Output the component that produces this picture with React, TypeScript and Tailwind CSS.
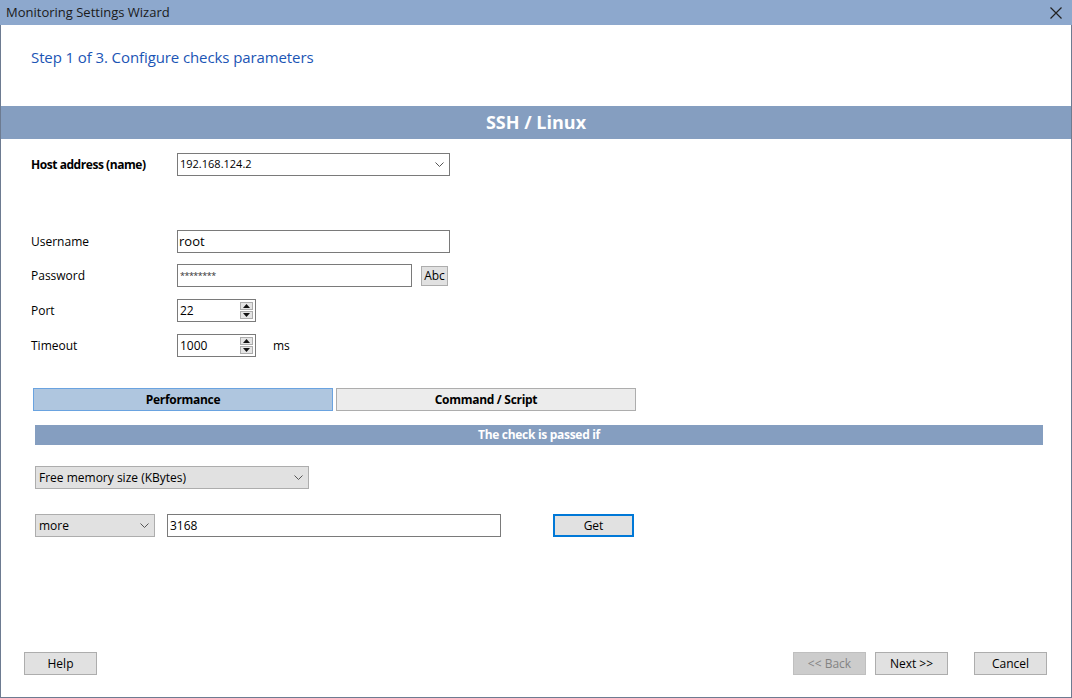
import React from 'react';

const font = { fontFamily: '"Open Sans", "Noto Sans", "Liberation Sans", sans-serif' };

function Chevron() {
  return (
    <svg width="9" height="6" viewBox="0 0 9 6" className="shrink-0">
      <path d="M0.5 0.5 L4.5 4.5 L8.5 0.5" fill="none" stroke="#555" strokeWidth="1" />
    </svg>
  );
}

function Spin({ value }: { value: string }) {
  return (
    <div className="flex h-[23px] w-[79px] items-center justify-between border border-[#7a7a7a] bg-white pl-[2px] pr-[2px]">
      <span className="text-[12px] text-black">{value}</span>
      <div className="flex flex-col gap-[1px]">
        <div className="flex h-[8px] w-[13px] items-center justify-center border border-[#adadad] bg-[#e5e5e5]">
          <svg width="7" height="4" viewBox="0 0 7 4"><path d="M0 4 L3.5 0 L7 4 Z" fill="#111" /></svg>
        </div>
        <div className="flex h-[8px] w-[13px] items-center justify-center border border-[#adadad] bg-[#e5e5e5]">
          <svg width="7" height="4" viewBox="0 0 7 4"><path d="M0 0 L3.5 4 L7 0 Z" fill="#111" /></svg>
        </div>
      </div>
    </div>
  );
}

function Row({ label, bold, children, className }: { label: string; bold?: boolean; children: React.ReactNode; className?: string }) {
  return (
    <div className={`flex h-[23px] items-center pl-[30px] ${className ?? ''}`}>
      <div className={`w-[146px] text-[12px] text-black ${bold ? 'font-bold tracking-[-0.45px]' : ''}`}>{label}</div>
      {children}
    </div>
  );
}

function WinButton({ label, disabled, x }: { label: string; disabled?: boolean; x?: string }) {
  return (
    <button
      className={`flex h-[23px] w-[73px] items-center justify-center border text-[12px] ${
        disabled ? 'border-[#bfbfbf] bg-[#cccccc] text-[#838383]' : 'border-[#adadad] bg-[#e1e1e1] text-black'
      } ${x ?? ''}`}
    >
      {label}
    </button>
  );
}

export default function App() {
  return (
    <div className="flex h-[698px] w-[1072px] flex-col bg-white" style={font}>
      {/* title bar */}
      <div className="flex h-[25px] shrink-0 items-center justify-between bg-[#8da8cd] pl-[6px] pr-[10px]">
        <span className="text-[13px] text-[#1a1a1a]">Monitoring Settings Wizard</span>
        <svg width="12" height="12" viewBox="0 0 12 12">
          <path d="M0.5 0.5 L11.5 11.5 M11.5 0.5 L0.5 11.5" stroke="#222" strokeWidth="1.2" />
        </svg>
      </div>

      <div className="flex flex-1 flex-col border-x border-b border-[#6d7b91]">
        {/* header */}
        <div className="flex h-[81px] shrink-0 items-center pb-[16px] pl-[30px]">
          <span className="text-[15px] tracking-[-0.1px] text-[#1b55b5]">Step 1 of 3. Configure checks parameters</span>
        </div>

        {/* section band */}
        <div className="flex h-[33px] shrink-0 items-center justify-center bg-[#859ec0]">
          <span className="text-[18px] font-bold text-white">SSH / Linux</span>
        </div>

        <Row label="Host address (name)" bold className="mt-[14px]">
          <div className="flex h-[23px] w-[273px] items-center justify-between border border-[#7a7a7a] bg-white pl-[2px] pr-[5px]">
            <span className="text-[11px] text-black">192.168.124.2</span>
            <Chevron />
          </div>
        </Row>

        <Row label="Username" className="mt-[54px]">
          <div className="flex h-[23px] w-[273px] items-center border border-[#7a7a7a] bg-white pl-[1px]">
            <span className="text-[13px] text-black">root</span>
          </div>
        </Row>

        <Row label="Password" className="mt-[11px]">
          <div className="flex h-[23px] w-[235px] items-center border border-[#7a7a7a] bg-white pl-[2px]">
            <span className="text-[9px] leading-none tracking-[-0.5px] text-[#333]">********</span>
          </div>
          <button className="ml-[9px] flex h-[20px] w-[27px] items-center justify-center border border-[#adadad] bg-[#e1e1e1] text-[12px] text-black">
            Abc
          </button>
        </Row>

        <Row label="Port" className="mt-[12px]">
          <Spin value="22" />
        </Row>

        <Row label="Timeout" className="mt-[12px]">
          <Spin value="1000" />
          <span className="ml-[17px] text-[12px] text-black">ms</span>
        </Row>

        {/* tabs */}
        <div className="mt-[31px] flex h-[23px] gap-[3px] pl-[32px]">
          <div className="flex w-[300px] items-center justify-center border border-[#6aa3e0] bg-[#afc6df] text-[12px] font-bold tracking-[-0.3px] text-black">
            Performance
          </div>
          <div className="flex w-[300px] items-center justify-center border border-[#adadad] bg-[#ececec] text-[12px] font-bold tracking-[-0.3px] text-black">
            Command / Script
          </div>
        </div>

        <div className="ml-[34px] mt-[14px] flex h-[20px] w-[1008px] items-center justify-center bg-[#859ec0]">
          <span className="text-[12px] font-bold tracking-[-0.3px] text-white">The check is passed if</span>
        </div>

        <div className="mt-[21px] flex pl-[34px]">
          <div className="flex h-[23px] w-[274px] items-center justify-between border border-[#adadad] bg-[#e1e1e1] pl-[3px] pr-[5px]">
            <span className="text-[12px] text-black">Free memory size (KBytes)</span>
            <Chevron />
          </div>
        </div>

        <div className="mt-[25px] flex items-center pl-[34px]">
          <div className="flex h-[23px] w-[120px] items-center justify-between border border-[#adadad] bg-[#e1e1e1] pl-[3px] pr-[5px]">
            <span className="text-[12px] text-black">more</span>
            <Chevron />
          </div>
          <div className="ml-[12px] flex h-[23px] w-[334px] items-center border border-[#7a7a7a] bg-white pl-[2px]">
            <span className="text-[12px] text-black">3168</span>
          </div>
          <button className="ml-[52px] flex h-[23px] w-[81px] items-center justify-center border-2 border-[#0078d7] bg-[#e1e1e1] text-[12px] text-black">
            Get
          </button>
        </div>

        <div className="flex-1" />

        {/* footer */}
        <div className="mb-[22px] flex items-center pl-[23px] pr-[24px]">
          <WinButton label="Help" />
          <div className="flex-1" />
          <WinButton label="<< Back" disabled />
          <WinButton label="Next >>" x="ml-[9px]" />
          <WinButton label="Cancel" x="ml-[26px]" />
        </div>
      </div>
    </div>
  );
}
